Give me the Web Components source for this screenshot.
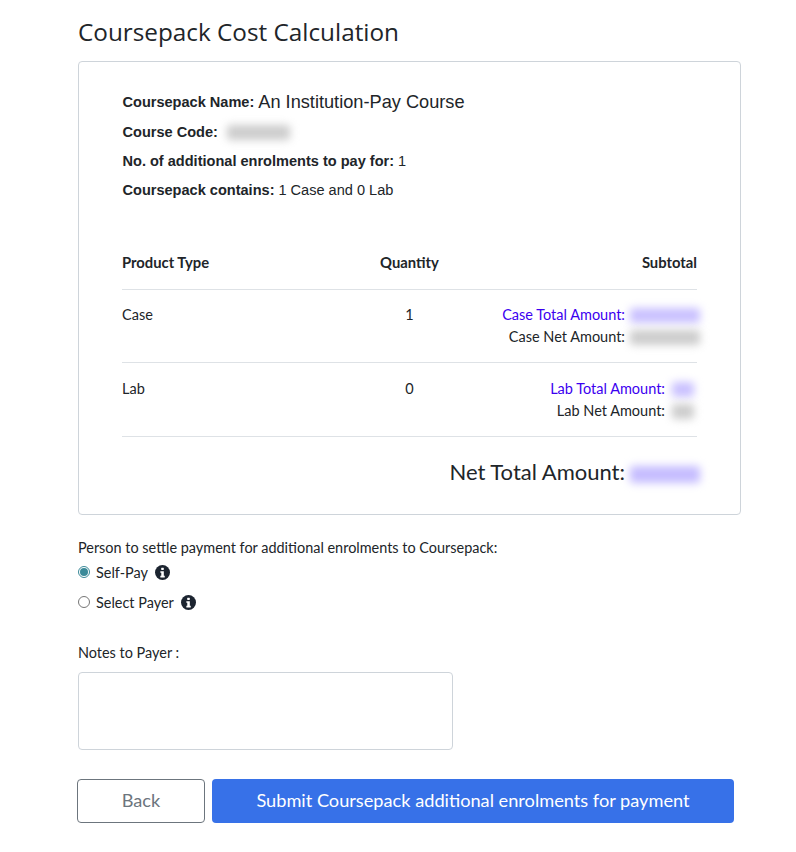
<!DOCTYPE html>
<html><head><meta charset="utf-8">
<style>
html,body{margin:0;background:#fff}
body{font-family:Lato,sans-serif;font-size:14.45px;color:#212529}
</style></head><body>
<template id="t-page"><style>
:host{display:block;width:663px;margin-left:78px;padding-top:15px}
h1{margin:0;height:46px;font:400 24.3px/34px "Open Sans",sans-serif;color:#212529}
</style><h1><slot name="title"></slot></h1><slot></slot></template>

<template id="t-card"><style>
:host{display:block;box-sizing:border-box;height:454px;border:1px solid #ced4da;border-radius:4px;padding:26px 43px 0 43px;background:#fff}
</style><slot></slot></template>

<template id="t-info"><style>
:host{display:block;height:29px;font:14.56px/29px "Liberation Sans",Arial,sans-serif;color:#212529;white-space:nowrap;padding-left:.5px}
b{font-weight:700}
.row{display:flex;align-items:center;gap:4px;height:29px}
</style><div class="row"><b><slot name="k"></slot></b><slot></slot></div></template>

<template id="t-smudge"><style>
:host{display:inline-block;height:15px;border-radius:3px;background:var(--c,#cccccc);filter:blur(4.5px);flex:none}
</style></template>

<template id="t-row"><style>
:host{display:grid;grid-template-columns:230px 115px 1fr;box-sizing:border-box;border-bottom:1px solid #dee2e6;font-size:14.5px;line-height:22px}
.q{text-align:center}
.s{text-align:right}
</style><div><slot name="a"></slot></div><div class="q"><slot name="b"></slot></div><div class="s"><slot name="c"></slot></div></template>

<template id="t-amount"><style>
:host{display:flex;justify-content:flex-end;align-items:center;gap:5px;height:22px;white-space:nowrap}
</style><slot></slot></template>

<template id="t-radio"><style>
:host{display:flex;align-items:center;height:30px}
.r{width:10px;height:10px;border:1px solid #767676;border-radius:50%;box-sizing:content-box;margin-right:6px;flex:none;position:relative;background:#fff}
:host([checked]) .r{border-color:#3b8a99}
:host([checked]) .r::after{content:"";position:absolute;inset:1px;border-radius:50%;background:#3b8a99}
svg{width:15px;height:15px;margin-left:7px;flex:none}
</style><span class="r"></span><slot></slot>
<svg viewBox="0 0 16 16"><circle cx="8" cy="8" r="8" fill="#1c2430"/><rect x="6.6" y="2.8" width="2.8" height="2.6" rx=".5" fill="#fff"/><path d="M5.7 6.6h3.7v4.9h1v1.7H5.7v-1.7h1V8.3h-1z" fill="#fff"/></svg></template>

<template id="t-notes"><style>
:host{display:block;width:375px;height:78px;box-sizing:border-box;border:1px solid #ced4da;border-radius:4px;background:#fff}
</style></template>

<template id="t-btn"><style>
:host{display:flex;align-items:center;justify-content:center;box-sizing:border-box;height:44px;border-radius:4px;font:18.2px/1 Lato,sans-serif;padding-bottom:2px}
:host([variant=outline]){width:128px;border:1px solid #6c757d;color:#6c757d;background:#fff}
:host([variant=primary]){width:522px;background:#3771e8;color:#fff}
</style><slot></slot></template>

<x-page>
  <span slot="title">Coursepack Cost Calculation</span>
  <x-card>
    <x-info><span slot="k">Coursepack Name:</span><span style="font-size:18.2px">An Institution-Pay Course</span></x-info>
    <x-info style="margin-top:1px"><span slot="k">Course Code:</span><x-smudge style="width:63px;margin-left:5px"></x-smudge></x-info>
    <x-info><span slot="k">No. of additional enrolments to pay for:</span><span>1</span></x-info>
    <x-info><span slot="k">Coursepack contains:</span><span>1 Case and 0 Lab</span></x-info>
    <x-row style="margin-top:31px;height:54px;padding-top:15px;font-weight:700;font-size:14.8px">
      <span slot="a">Product Type</span><span slot="b">Quantity</span><span slot="c">Subtotal</span>
    </x-row>
    <x-row style="height:73px;padding-top:14px">
      <span slot="a">Case</span><span slot="b">1</span>
      <div slot="c">
        <x-amount style="color:#3c00f0">Case Total Amount:<x-smudge style="width:70px;margin-right:-3px;--c:#c9c0ff"></x-smudge></x-amount>
        <x-amount>Case Net Amount:<x-smudge style="width:70px;margin-right:-3px"></x-smudge></x-amount>
      </div>
    </x-row>
    <x-row style="height:74px;padding-top:15px">
      <span slot="a">Lab</span><span slot="b">0</span>
      <div slot="c">
        <x-amount style="color:#3c00f0">Lab Total Amount:<x-smudge style="width:22px;margin-left:2px;margin-right:3px;--c:#c9c0ff"></x-smudge></x-amount>
        <x-amount>Lab Net Amount:<x-smudge style="width:22px;margin-left:2px;margin-right:3px"></x-smudge></x-amount>
      </div>
    </x-row>
    <x-amount style="height:68px;font-size:22px"><span>Net Total Amount:</span><x-smudge style="width:70px;height:17px;margin-top:6px;margin-right:-3px;--c:#c5bcff"></x-smudge></x-amount>
  </x-card>
  <div style="margin-top:24px;line-height:18px">Person to settle payment for additional enrolments to Coursepack:</div>
  <x-radio checked>Self-Pay</x-radio>
  <x-radio>Select Payer</x-radio>
  <div style="margin-top:27px;line-height:18px">Notes to Payer :</div>
  <x-notes style="margin-top:10px"></x-notes>
  <div style="display:flex;gap:7px;margin:29px 0 0 -1px">
    <x-btn variant="outline">Back</x-btn>
    <x-btn variant="primary">Submit Coursepack additional enrolments for payment</x-btn>
  </div>
</x-page>
<script>
for (const [tag, id] of [['x-page','t-page'],['x-card','t-card'],['x-info','t-info'],['x-smudge','t-smudge'],['x-row','t-row'],['x-amount','t-amount'],['x-radio','t-radio'],['x-notes','t-notes'],['x-btn','t-btn']]) {
  customElements.define(tag, class extends HTMLElement {
    constructor(){super();this.attachShadow({mode:'open'}).appendChild(document.getElementById(id).content.cloneNode(true));}
  });
}
</script>
</body></html>
